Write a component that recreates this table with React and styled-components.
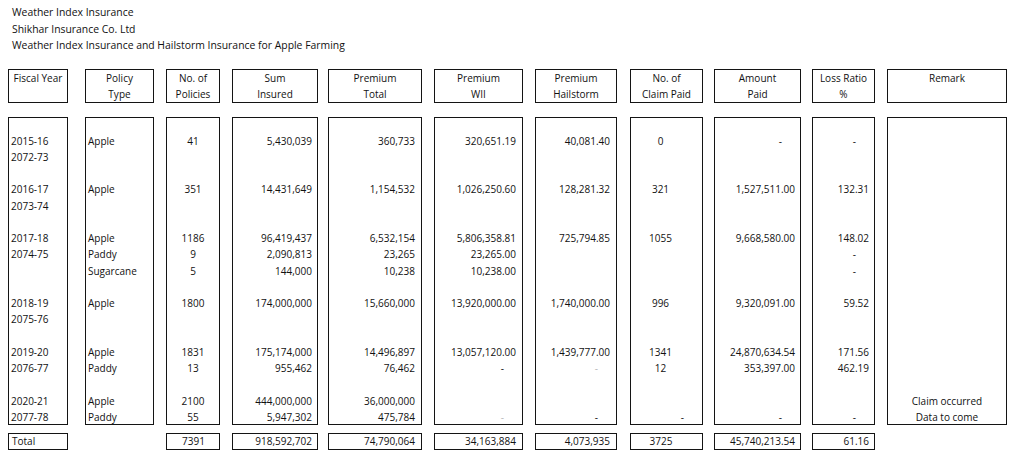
import React from 'react';
import styled, { createGlobalStyle } from 'styled-components';

const GlobalStyle = createGlobalStyle`
    html, body {
        margin: 0;
        padding: 0;
        background: #ffffff;
    }
    body {
        font-family: "Open Sans", "Noto Sans", "Liberation Sans", sans-serif;
        font-size: 10px;
        color: #111111;
    }
`;

const Page = styled.div`
    width: 1017px;
    height: 455px;
    padding: 4px 8px 0 8px;
    box-sizing: border-box;
    overflow: hidden;
`;

const Titles = styled.div`
    padding-left: 4px;
    font-size: 10.4px;
    line-height: 16.5px;
    margin-bottom: 15px;
`;

const Table = styled.div`
    display: flex;
    align-items: flex-start;
`;

const Column = styled.div`
    width: ${({ $w }) => $w}px;
    margin-left: ${({ $gap }) => $gap}px;
    display: flex;
    flex-direction: column;
`;

const Box = styled.div`
    box-sizing: border-box;
    border: 1px solid #141414;
`;

const Header = styled(Box)`
    height: 34px;
    line-height: 16px;
    text-align: center;
    margin-bottom: 14px;
`;

const Body = styled(Box)`
    height: 308px;
    padding-top: 15px;
    overflow: hidden;
`;

const Line = styled.div`
    height: 16.25px;
    line-height: 16.25px;
    white-space: nowrap;
    text-align: ${({ $align }) => $align};
    padding-left: ${({ $pl }) => $pl}px;
    padding-right: ${({ $pr }) => $pr}px;
    color: ${({ $faint }) => ($faint ? '#b8b8b8' : 'inherit')};
`;

const TotalBox = styled(Box)`
    margin-top: 8px;
    height: 17px;
    line-height: 15px;
    white-space: nowrap;
    text-align: ${({ $align }) => $align};
    padding-left: ${({ $pl }) => $pl}px;
    padding-right: ${({ $pr }) => $pr}px;
`;

const NoTotal = styled.div`
    margin-top: 8px;
    height: 17px;
`;

const columns = [
    { w: 60, gap: 0, head: ['Fiscal Year'], align: 'left', pl: 2, pr: 0, total: 'Total' },
    { w: 69, gap: 17, head: ['Policy', 'Type'], align: 'left', pl: 2, pr: 0, total: null },
    { w: 54, gap: 12, head: ['No. of', 'Policies'], align: 'center', pl: 0, pr: 0, total: '7391' },
    { w: 86, gap: 12, head: ['Sum', 'Insured'], align: 'right', pl: 0, pr: 5, total: '918,592,702' },
    { w: 94, gap: 10, head: ['Premium', 'Total'], align: 'right', pl: 0, pr: 6, total: '74,790,064' },
    { w: 89, gap: 12, head: ['Premium', 'WII'], align: 'right', pl: 0, pr: 6, total: '34,163,884' },
    { w: 82, gap: 12, head: ['Premium', 'Hailstorm'], align: 'right', pl: 0, pr: 6, total: '4,073,935' },
    { w: 73, gap: 13, head: ['No. of', 'Claim Paid'], align: 'center', pl: 0, pr: 12, total: '3725' },
    { w: 87, gap: 11, head: ['Amount', 'Paid'], align: 'right', pl: 0, pr: 5, total: '45,740,213.54' },
    { w: 63, gap: 11, head: ['Loss Ratio', '%'], align: 'right', pl: 0, pr: 5, total: '61.16' },
    { w: 120, gap: 12, head: ['Remark'], align: 'center', pl: 0, pr: 0, total: null },
];

// one entry per printed line; null is an empty spacer line
// 'f-' is a faint dash as it shows in the scan
const rows = [
    ['2015-16', 'Apple', '41', '5,430,039', '360,733', '320,651.19', '40,081.40', '0', '-', '-', ''],
    ['2072-73', '', '', '', '', '', '', '', '', '', ''],
    null,
    ['2016-17', 'Apple', '351', '14,431,649', '1,154,532', '1,026,250.60', '128,281.32', '321', '1,527,511.00', '132.31', ''],
    ['2073-74', '', '', '', '', '', '', '', '', '', ''],
    null,
    ['2017-18', 'Apple', '1186', '96,419,437', '6,532,154', '5,806,358.81', '725,794.85', '1055', '9,668,580.00', '148.02', ''],
    ['2074-75', 'Paddy', '9', '2,090,813', '23,265', '23,265.00', '', '', '', '-', ''],
    ['', 'Sugarcane', '5', '144,000', '10,238', '10,238.00', '', '', '', '-', ''],
    null,
    ['2018-19', 'Apple', '1800', '174,000,000', '15,660,000', '13,920,000.00', '1,740,000.00', '996', '9,320,091.00', '59.52', ''],
    ['2075-76', '', '', '', '', '', '', '', '', '', ''],
    null,
    ['2019-20', 'Apple', '1831', '175,174,000', '14,496,897', '13,057,120.00', '1,439,777.00', '1341', '24,870,634.54', '171.56', ''],
    ['2076-77', 'Paddy', '13', '955,462', '76,462', '-', 'f-', '12', '353,397.00', '462.19', ''],
    null,
    ['2020-21', 'Apple', '2100', '444,000,000', '36,000,000', '', '', '', '', '', 'Claim occurred'],
    ['2077-78', 'Paddy', '55', '5,947,302', '475,784', 'f-', '-', '-', '-', '-', 'Data to come'],
];

const Cell = ({ col, value }) => {
    const isDash = value === '-' || value === 'f-';
    return (
        <Line
            $align={isDash ? 'right' : col.align}
            $pl={col.pl}
            $pr={isDash ? 18 : col.pr}
            $faint={value === 'f-'}
        >
            {isDash ? '-' : value || '\u00a0'}
        </Line>
    );
};

const App = () => (
    <Page>
        <GlobalStyle />
        <Titles>
            <div>Weather Index Insurance</div>
            <div>Shikhar Insurance Co. Ltd</div>
            <div>Weather Index Insurance and Hailstorm Insurance for Apple Farming</div>
        </Titles>
        <Table>
            {columns.map((col, c) => (
                <Column key={c} $w={col.w} $gap={col.gap}>
                    <Header>
                        {col.head.map((h) => (
                            <div key={h}>{h}</div>
                        ))}
                    </Header>
                    <Body>
                        {rows.map((row, r) => (
                            <Cell key={r} col={col} value={row ? row[c] : ''} />
                        ))}
                    </Body>
                    {col.total ? (
                        <TotalBox $align={col.align} $pl={col.pl + 1} $pr={col.pr}>
                            {col.total}
                        </TotalBox>
                    ) : (
                        <NoTotal />
                    )}
                </Column>
            ))}
        </Table>
    </Page>
);

export default App;
